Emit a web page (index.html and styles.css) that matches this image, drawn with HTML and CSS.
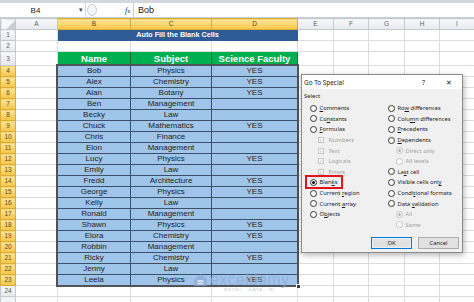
FILE: index.html
```html
<!DOCTYPE html>
<html lang="en">
<head>
  <meta charset="UTF-8" />
  <title>Auto Fill the Blank Cells</title>
  <link rel="stylesheet" href="styles.css">
</head>
<body>
<div class="app">
  <div class="ribbon-edge"></div>
  <div class="formula-bar">
    <div class="name-box">B4<span class="caret">▾</span></div>
    <div class="notch"></div>
    <div class="fx"><i>f</i><span>x</span></div>
    <div class="formula">Bob</div>
  </div>

  <table class="grid">
    <colgroup>
      <col class="c-rh"><col class="c-a"><col class="c-b"><col class="c-c"><col class="c-d">
      <col class="c-e"><col class="c-f"><col class="c-g"><col class="c-h"><col class="c-i">
    </colgroup>
    <tr class="col-head">
      <th class="corner"></th><th>A</th><th class="sel">B</th><th class="sel">C</th><th class="sel">D</th>
      <th>E</th><th>F</th><th>G</th><th>H</th><th>I</th>
    </tr>
    <tr><th>1</th><td></td><td class="title" colspan="3">Auto Fill the Blank Cells</td><td></td><td></td><td></td><td></td><td></td></tr>
    <tr><th>2</th><td></td><td></td><td></td><td></td><td></td><td></td><td></td><td></td><td></td></tr>
    <tr class="head-row"><th>3</th><td></td><td class="hd">Name</td><td class="hd">Subject</td><td class="hd">Science Faculty</td><td></td><td></td><td></td><td></td><td></td></tr>
    <tr class="data"><th>4</th><td></td><td class="active">Bob</td><td>Physics</td><td>YES</td><td></td><td></td><td></td><td></td><td></td></tr>
    <tr class="data"><th>5</th><td></td><td>Alex</td><td>Chemistry</td><td>YES</td><td></td><td></td><td></td><td></td><td></td></tr>
    <tr class="data"><th>6</th><td></td><td>Alan</td><td>Botany</td><td>YES</td><td></td><td></td><td></td><td></td><td></td></tr>
    <tr class="data"><th>7</th><td></td><td>Ben</td><td>Management</td><td></td><td></td><td></td><td></td><td></td><td></td></tr>
    <tr class="data"><th>8</th><td></td><td>Becky</td><td>Law</td><td></td><td></td><td></td><td></td><td></td><td></td></tr>
    <tr class="data"><th>9</th><td></td><td>Chuck</td><td>Mathematics</td><td>YES</td><td></td><td></td><td></td><td></td><td></td></tr>
    <tr class="data"><th>10</th><td></td><td>Chris</td><td>Finance</td><td></td><td></td><td></td><td></td><td></td><td></td></tr>
    <tr class="data"><th>11</th><td></td><td>Elon</td><td>Management</td><td></td><td></td><td></td><td></td><td></td><td></td></tr>
    <tr class="data"><th>12</th><td></td><td>Lucy</td><td>Physics</td><td>YES</td><td></td><td></td><td></td><td></td><td></td></tr>
    <tr class="data"><th>13</th><td></td><td>Emily</td><td>Law</td><td></td><td></td><td></td><td></td><td></td><td></td></tr>
    <tr class="data"><th>14</th><td></td><td>Fredd</td><td>Architecture</td><td>YES</td><td></td><td></td><td></td><td></td><td></td></tr>
    <tr class="data"><th>15</th><td></td><td>George</td><td>Physics</td><td>YES</td><td></td><td></td><td></td><td></td><td></td></tr>
    <tr class="data"><th>16</th><td></td><td>Kelly</td><td>Law</td><td></td><td></td><td></td><td></td><td></td><td></td></tr>
    <tr class="data"><th>17</th><td></td><td>Ronald</td><td>Management</td><td></td><td></td><td></td><td></td><td></td><td></td></tr>
    <tr class="data"><th>18</th><td></td><td>Shawn</td><td>Physics</td><td>YES</td><td></td><td></td><td></td><td></td><td></td></tr>
    <tr class="data"><th>19</th><td></td><td>Elora</td><td>Chemistry</td><td>YES</td><td></td><td></td><td></td><td></td><td></td></tr>
    <tr class="data"><th>20</th><td></td><td>Robbin</td><td>Management</td><td></td><td></td><td></td><td></td><td></td><td></td></tr>
    <tr class="data"><th>21</th><td></td><td>Ricky</td><td>Chemistry</td><td>YES</td><td></td><td></td><td></td><td></td><td></td></tr>
    <tr class="data"><th>22</th><td></td><td>Jenny</td><td>Law</td><td></td><td></td><td></td><td></td><td></td><td></td></tr>
    <tr class="data"><th>23</th><td></td><td>Leela</td><td>Physics</td><td>YES</td><td></td><td></td><td></td><td></td><td></td></tr>
    <tr class="plain"><th>24</th><td></td><td></td><td></td><td></td><td></td><td></td><td></td><td></td><td></td></tr>
    <tr class="plain"><th></th><td></td><td></td><td></td><td></td><td></td><td></td><td></td><td></td><td></td></tr>
  </table>

  <!-- selected range B4:D23 -->
  <div class="selection"><span class="fill-handle"></span></div>

  <div class="watermark">
    <svg width="15" height="14" viewBox="0 0 15 14">
      <path d="M1 6.5 L7.5 1 L14 6.5 L14 13 L1 13 Z" fill="#8fa9d4"/>
      <path d="M4.5 8 h6 M4.5 10.5 h6" stroke="#fff" stroke-width="1.4"/>
    </svg>
    <div class="wm-text">
      <span class="wm-name">exceldemy</span>
      <span class="wm-tag">EXCEL · DATA · BI</span>
    </div>
  </div>

  <div class="dialog">
    <div class="dlg-title">
      <span class="dlg-name">Go To Special</span>
      <span class="help">?</span>
      <span class="close">✕</span>
    </div>
    <div class="dlg-body">
      <div class="group-label">Select</div>
      <div class="options">
        <div class="opt-col left">
          <div class="opt"><span class="radio"></span><span><u>C</u>omments</span></div>
          <div class="opt"><span class="radio"></span><span>Co<u>n</u>stants</span></div>
          <div class="opt"><span class="radio"></span><span><u>F</u>ormulas</span></div>
          <div class="opt sub off"><span class="check">✓</span><span>Numbers</span></div>
          <div class="opt sub off"><span class="check">✓</span><span>Text</span></div>
          <div class="opt sub off"><span class="check">✓</span><span>Logicals</span></div>
          <div class="opt sub off"><span class="check">✓</span><span><u>E</u>rrors</span></div>
          <div class="opt"><span class="radio on"></span><span>Blan<u>k</u>s</span></div>
          <div class="opt"><span class="radio"></span><span>Current <u>r</u>egion</span></div>
          <div class="opt"><span class="radio"></span><span>Current <u>a</u>rray</span></div>
          <div class="opt"><span class="radio"></span><span>O<u>b</u>jects</span></div>
        </div>
        <div class="opt-col right">
          <div class="opt"><span class="radio"></span><span>Ro<u>w</u> differences</span></div>
          <div class="opt"><span class="radio"></span><span>Colu<u>m</u>n differences</span></div>
          <div class="opt"><span class="radio"></span><span><u>P</u>recedents</span></div>
          <div class="opt"><span class="radio"></span><span><u>D</u>ependents</span></div>
          <div class="opt sub off"><span class="radio on"></span><span>Direct only</span></div>
          <div class="opt sub off"><span class="radio"></span><span>All levels</span></div>
          <div class="opt"><span class="radio"></span><span>La<u>s</u>t cell</span></div>
          <div class="opt"><span class="radio"></span><span>Visible cells onl<u>y</u></span></div>
          <div class="opt"><span class="radio"></span><span>Condi<u>t</u>ional formats</span></div>
          <div class="opt"><span class="radio"></span><span>Data <u>v</u>alidation</span></div>
          <div class="opt sub off"><span class="radio on"></span><span>All</span></div>
          <div class="opt sub off"><span class="radio"></span><span>Same</span></div>
        </div>
      </div>
      <div class="buttons">
        <button class="btn ok">OK</button>
        <button class="btn">Cancel</button>
      </div>
    </div>
    <div class="mark"></div>
  </div>
</div>
</body>
</html>
```

FILE: styles.css
```css
* {
  box-sizing: border-box;
}

body {
  margin: 0;
  background: #fff;
  overflow: hidden;
}

.app {
  position: relative;
  width: 474px;
  height: 302px;
  overflow: hidden;
  font-family: "Liberation Sans", sans-serif;
}

.ribbon-edge {
  height: 3px;
  background: #d3d8de;
}

/* formula bar */
.formula-bar {
  display: flex;
  align-items: center;
  height: 15px;
  background: #fff;
  border-bottom: 1px solid #c6ccd3;
  font-size: 8px;
  color: #222;
}

.name-box {
  position: relative;
  width: 86px;
  height: 100%;
  display: flex;
  align-items: center;
  justify-content: center;
  padding-right: 14px;
  border-right: 1px solid #d7dbe0;
}

.caret {
  position: absolute;
  right: 2px;
  font-size: 7px;
  color: #444;
}

.notch {
  width: 10px;
  height: 12px;
  margin-left: 1px;
  border: 1px solid #c9ced4;
  border-radius: 50%;
  background: #f4f5f7;
}

.fx {
  margin-left: 28px;
  width: 8px;
  font-family: "Liberation Serif", serif;
  font-size: 8px;
  color: #333;
}

.fx span {
  font-size: 6px;
}

.formula {
  height: 100%;
  flex: 1;
  display: flex;
  align-items: center;
  padding-left: 4px;
  border-left: 1px solid #c6ccd3;
  font-size: 9px;
}

/* sheet grid */
.grid {
  width: 474px;
  border-collapse: collapse;
  table-layout: fixed;
  font-size: 8px;
  color: #222;
}

.c-rh { width: 15px; }
.c-a { width: 42px; }
.c-b { width: 73px; }
.c-c { width: 81px; }
.c-d { width: 86px; }
.c-e { width: 36px; }
.c-f { width: 35px; }
.c-g { width: 36px; }
.c-h { width: 35px; }
.c-i { width: 35px; }

.grid tr {
  height: 11px;
}

.grid td,
.grid th {
  padding: 0;
  height: 11px;
  line-height: 10px;
  border: 1px solid #dadcdf;
  text-align: center;
  white-space: nowrap;
  overflow: hidden;
}

.grid th {
  font-weight: normal;
  font-size: 6.5px;
  color: #5a5f66;
  background: linear-gradient(#f7f8fa, #e6e9ed);
  border-color: #c4c9cf;
}

.grid th.sel,
.data th {
  background: linear-gradient(#fce49a, #f5c646);
  border-color: #d9ad3c;
  color: #5b4812;
}

.corner {
  background: linear-gradient(135deg, #f7f8fa 60%, #c9ced4 61%) !important;
}

.title {
  background: #2f5b96;
  color: #fff;
  font-weight: bold;
  font-size: 7.2px;
  border-color: #2f5b96 !important;
}

.head-row {
  height: 14px;
}

.head-row td {
  height: 14px;
}

.hd {
  background: #00b050;
  color: #fff;
  font-weight: bold;
  font-size: 9.5px;
  line-height: 13px;
  border-color: #1e6b3c !important;
}

.data td:nth-child(n+3):nth-child(-n+5) {
  background: #a0c5ea;
  border-color: #3d4f6a;
}

.data td.active {
  background: #fff;
}

/* overlays */
.selection {
  position: absolute;
  left: 56px;
  top: 64px;
  width: 243px;
  height: 223px;
  border: 2px solid #505458;
}

.fill-handle {
  position: absolute;
  right: -4px;
  bottom: -4px;
  width: 5px;
  height: 5px;
  background: #3a3d40;
  border: 1px solid #fff;
}

.watermark {
  position: absolute;
  left: 193px;
  top: 273px;
  display: flex;
  align-items: flex-start;
  gap: 2px;
  opacity: 0.7;
}

.wm-text {
  display: flex;
  flex-direction: column;
  align-items: center;
}

.wm-name {
  font-size: 16px;
  line-height: 14px;
  color: #8fa9d4;
  letter-spacing: 0.3px;
}

.wm-tag {
  font-size: 4px;
  line-height: 5px;
  color: #9aa8bb;
  letter-spacing: 1px;
}

/* Go To Special dialog */
.dialog {
  position: absolute;
  left: 301px;
  top: 74px;
  width: 162px;
  height: 179px;
  background: #f0f0f0;
  border: 1px solid #8a8a8a;
  box-shadow: 1px 2px 6px rgba(0, 0, 0, 0.3);
  font-family: "Noto Sans", "Open Sans", sans-serif;
  font-size: 5.8px;
  color: #1a1a1a;
}

.dlg-title {
  display: flex;
  align-items: center;
  height: 14px;
  padding-left: 2px;
  background: #fff;
  font-size: 6.4px;
}

.dlg-name {
  flex: 1;
}

.help {
  width: 24px;
  font-size: 7px;
}

.close {
  width: 16px;
  font-size: 7px;
}

.dlg-body {
  padding-top: 2px;
}

.group-label {
  height: 12px;
  line-height: 10px;
  padding-left: 2px;
}

.options {
  display: flex;
}

.opt-col.left {
  width: 85.5px;
  padding-left: 7.5px;
}

.opt-col.right {
  flex: 1;
}

.opt {
  display: flex;
  align-items: center;
  gap: 3px;
  height: 10.6px;
  white-space: nowrap;
}

.opt.sub {
  padding-left: 8px;
}

.opt.off {
  color: #a0a0a0;
}

.radio {
  width: 7px;
  height: 7px;
  border: 1px solid #333;
  border-radius: 50%;
  background: #fff;
  display: flex;
  align-items: center;
  justify-content: center;
}

.radio.on::after {
  content: "";
  width: 3px;
  height: 3px;
  border-radius: 50%;
  background: #111;
}

.off .radio {
  border-color: #c2c2c2;
}

.off .radio.on::after {
  background: #b5b5b5;
}

.check {
  width: 6px;
  height: 6px;
  border: 1px solid #c6c6c6;
  background: #fff;
  font-size: 5px;
  line-height: 4px;
  text-align: center;
  color: #aaa;
  margin-right: 2px;
}

.buttons {
  display: flex;
  justify-content: flex-end;
  gap: 6px;
  margin-top: 7px;
  padding-right: 3px;
}

.btn {
  width: 41px;
  height: 12px;
  padding: 0;
  font-family: inherit;
  font-size: 5.8px;
  color: #1a1a1a;
  background: #e1e1e1;
  border: 1px solid #adadad;
}

.btn.ok {
  border: 1px solid #0078d7;
  box-shadow: inset 0 0 0 1px #e5f1fb;
}

.mark {
  position: absolute;
  left: 3px;
  top: 100px;
  width: 38px;
  height: 14px;
  border: 2px solid #e0161b;
}
```
